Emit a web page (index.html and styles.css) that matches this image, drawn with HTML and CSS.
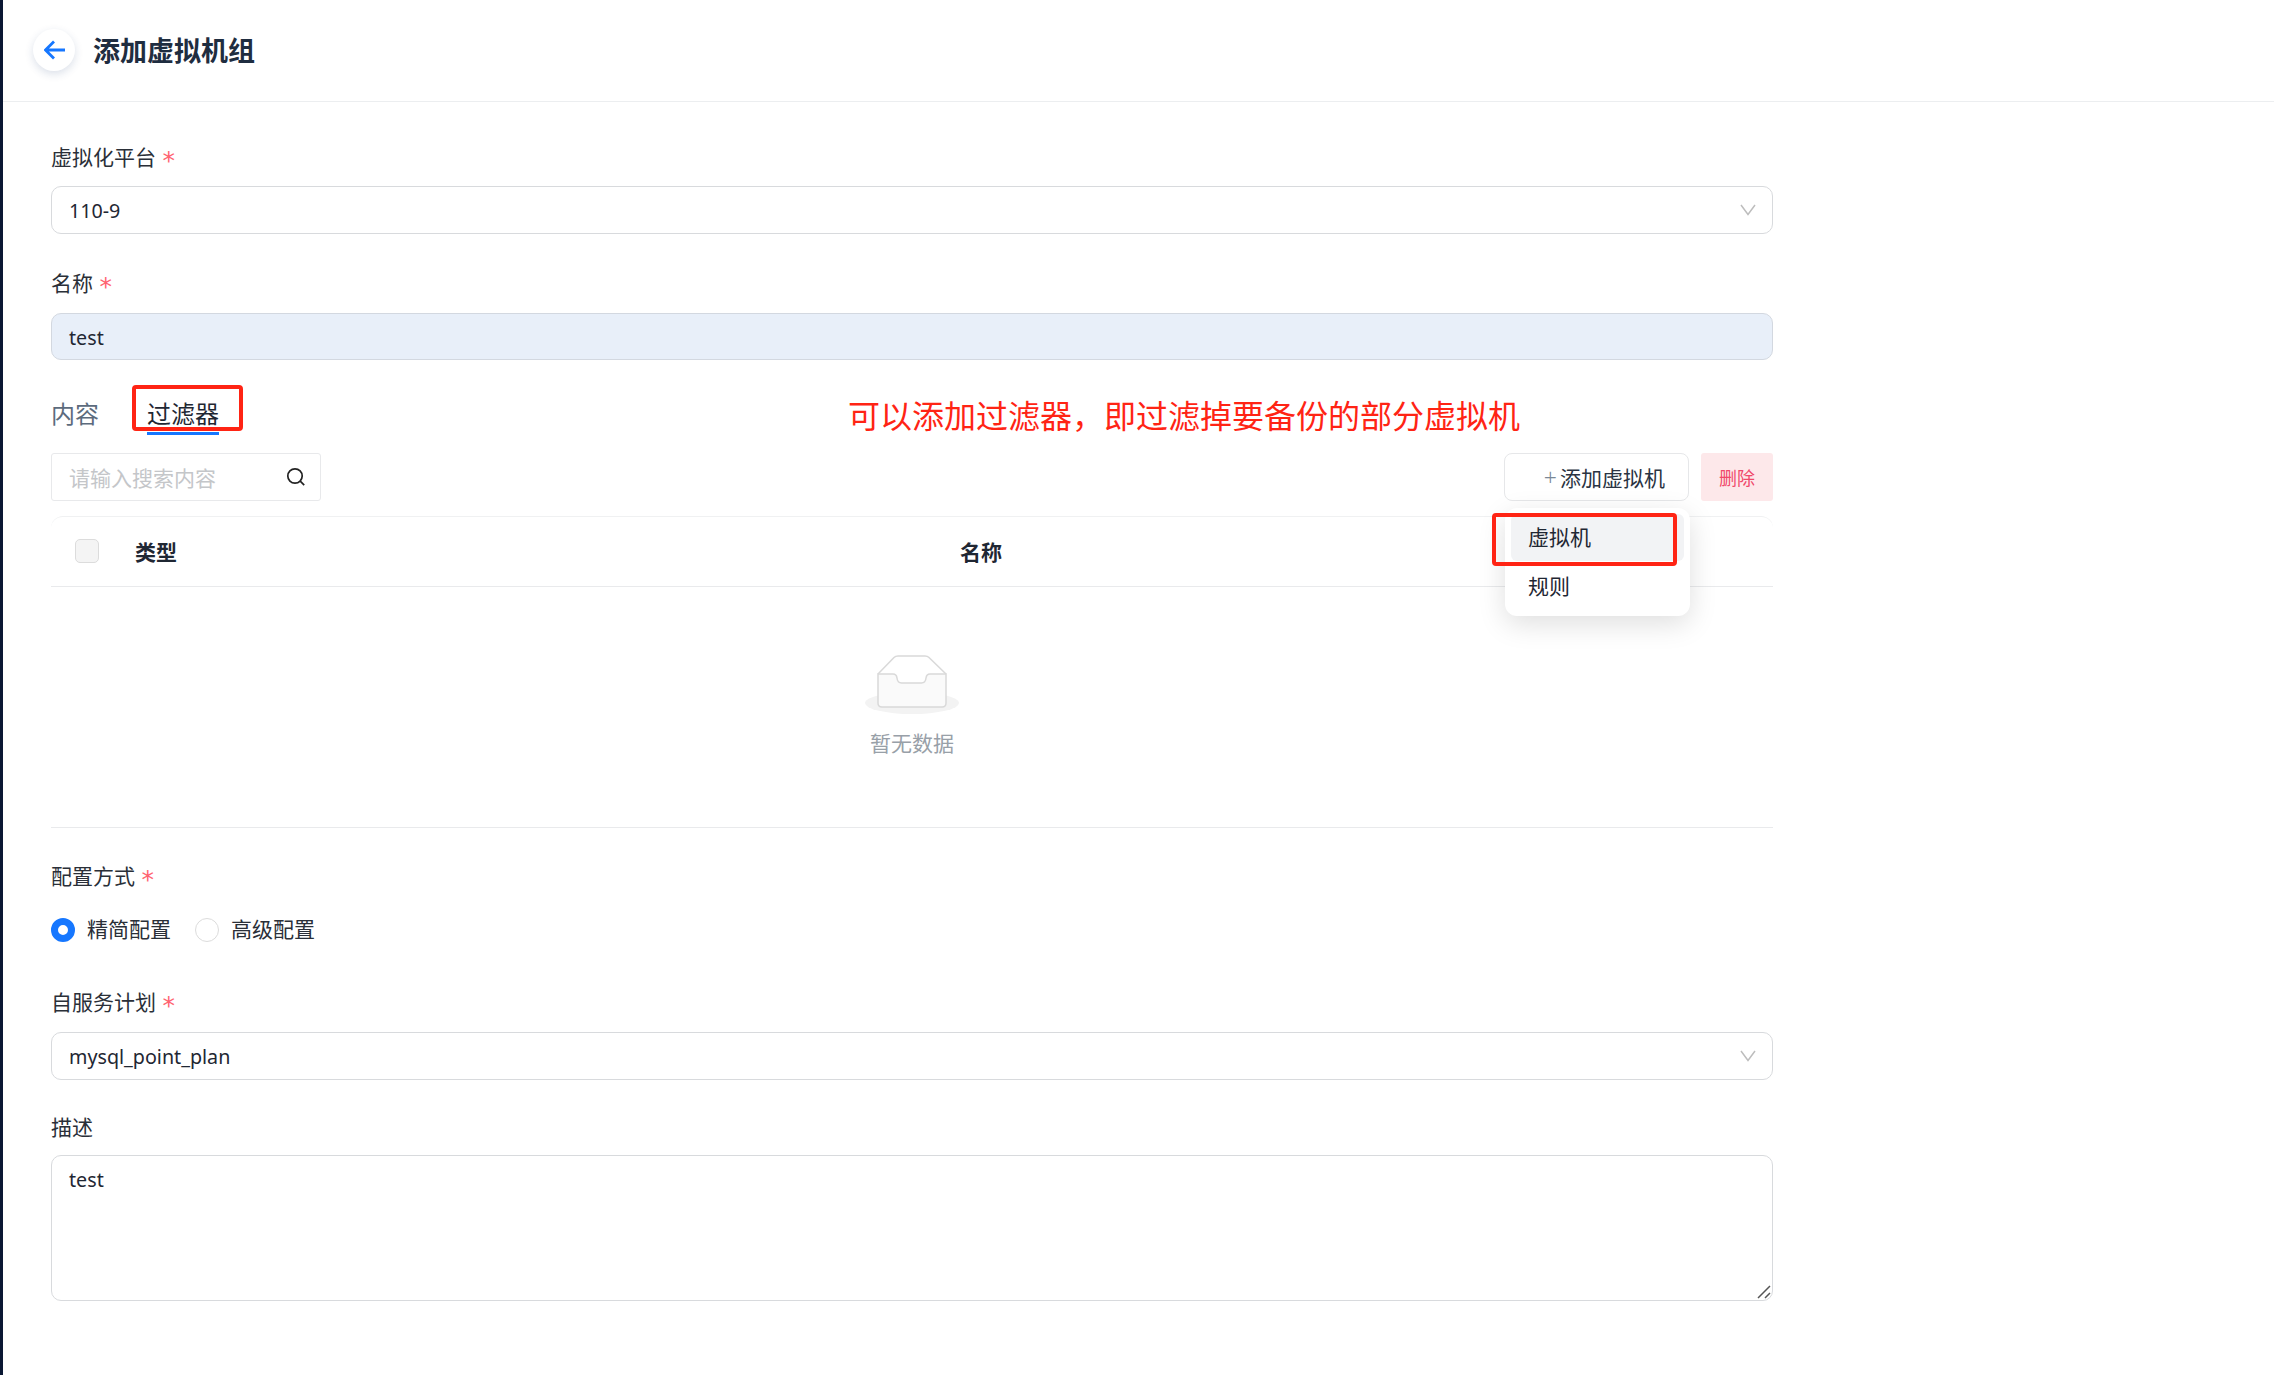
FILE: index.html
```html
<!DOCTYPE html>
<html lang="zh-CN">
<head>
<meta charset="utf-8">
<title>添加虚拟机组</title>
<link rel="stylesheet" href="styles.css">
</head>
<body>
<div class="page">
  <header class="topbar">
    <button class="back" aria-label="返回">
      <svg class="back-icon" width="22" height="20" viewBox="0 0 22 20"><path d="M21 10H2M10 1.500 1.500 10l8.500 8.500" fill="none" stroke="#1677ff" stroke-width="2.800"/></svg>
    </button>
    <h1 class="title">添加虚拟机组</h1>
  </header>
  <main class="form">
    <div class="label">虚拟化平台 <span class="req">*</span></div>
    <div class="control select"><span class="value">110-9</span>
      <svg class="chev" width="16" height="12" viewBox="0 0 16 12"><path d="M1 1l7 9.500L15 1" fill="none" stroke="#bdbdbd" stroke-width="1.500"/></svg>
    </div>

    <div class="label label-name">名称 <span class="req">*</span></div>
    <div class="control filled"><span class="value">test</span></div>

    <div class="tabs">
      <div class="tab">内容</div>
      <div class="tab active">过滤器<span class="mark mark-tab"></span></div>
      <div class="note">可以添加过滤器，即过滤掉要备份的部分虚拟机</div>
    </div>

    <div class="toolbar">
      <div class="search">
        <span class="placeholder">请输入搜索内容</span>
        <svg width="20" height="20" viewBox="0 0 20 20"><circle cx="9" cy="9" r="7.200" fill="none" stroke="#222" stroke-width="1.700"/><path d="M14.200 14.200l4 4" stroke="#222" stroke-width="1.700"/></svg>
      </div>
      <div class="actions">
        <div class="add-wrap">
          <button class="add"><span class="plus">+</span>添加虚拟机</button>
          <div class="menu">
            <div class="menu-item current">虚拟机</div>
            <div class="menu-item next">规则</div>
            <span class="mark mark-menu"></span>
          </div>
        </div>
        <button class="del">删除</button>
      </div>
    </div>

    <div class="thead">
      <span class="check"></span>
      <span class="th">类型</span>
      <span class="th">名称</span>
    </div>
    <div class="empty">
      <svg width="95" height="60" viewBox="0 0 95 60">
        <ellipse cx="47" cy="48" rx="47" ry="11" fill="#f3f3f3"/>
        <path d="M13 19 29 2.500Q30.500 1 33 1h27q2.500 0 4 1.500L81 19" fill="#fff" stroke="#d9d9d9" stroke-width="1.500"/>
        <path d="M13 19h15q3.500 0 4 4 .5 5 4.500 5h20q4 0 4.500-5 .5-4 4-4h16v29q0 4-4 4H17q-4 0-4-4z" fill="#fafafa" stroke="#d9d9d9" stroke-width="1.500"/>
      </svg>
      <div class="empty-text">暂无数据</div>
    </div>

    <div class="label label-config">配置方式 <span class="req">*</span></div>
    <div class="radios">
      <span class="radio on"></span><span class="radio-text">精简配置</span>
      <span class="radio"></span><span class="radio-text">高级配置</span>
    </div>

    <div class="label label-plan">自服务计划 <span class="req">*</span></div>
    <div class="control select"><span class="value">mysql_point_plan</span>
      <svg class="chev" width="16" height="12" viewBox="0 0 16 12"><path d="M1 1l7 9.500L15 1" fill="none" stroke="#bdbdbd" stroke-width="1.500"/></svg>
    </div>

    <div class="label label-desc">描述</div>
    <div class="area-wrap">
      <textarea class="area">test</textarea>
      <svg class="grip" width="14" height="14" viewBox="0 0 14 14"><path d="M1 13 13 1M8 13l5-5" stroke="#555" stroke-width="1.500" fill="none"/></svg>
    </div>
  </main>
</div>
</body>
</html>
```

FILE: styles.css
```css
* { box-sizing: border-box; }
html, body { margin: 0; height: 100%; }
body {
  background: #fff;
  color: #1f2733;
  font-family: "Noto Sans", "Noto Sans CJK SC", sans-serif;
  font-size: 21px;
}
.page {
  height: 1375px;
  overflow: hidden;
  border-left: 3px solid #0a1733;
}
.topbar {
  height: 102px;
  border-bottom: 1px solid #eceef0;
  display: flex;
  align-items: center;
  padding-left: 30px;
  gap: 19px;
  padding-bottom: 1px;
}
.back {
  width: 42px;
  height: 42px;
  border: 0;
  border-radius: 50%;
  background: #fff;
  box-shadow: 0 3px 9px rgba(30, 60, 120, .16);
  display: flex;
  align-items: center;
  justify-content: center;
  padding: 0;
}
.back-icon { margin-left: 2px; }
.title {
  margin: 2px 0 0 -1px;
  font-size: 27px;
  line-height: 36px;
  font-weight: 700;
  color: #1f2d40;
}
.form {
  width: 1770px;
  padding: 40px 0 0 48px;
}
.label {
  height: 30px;
  line-height: 30px;
  margin-bottom: 14px;
  color: #2a2f38;
}
.req {
  color: #ff6370;
  margin-left: 1px;
  font-family: "DejaVu Sans", sans-serif;
  font-size: 25px;
  line-height: 1;
  vertical-align: -4px;
}
.label-name { margin-top: 34px; margin-bottom: 15px; }
.label-config { margin-top: 33px; margin-bottom: 25px; }
.label-plan { margin-top: 43px; margin-bottom: 15px; }
.label-desc { margin-top: 32px; margin-bottom: 13px; }
.control {
  height: 48px;
  border: 1.500px solid #d8dadd;
  border-radius: 10px;
  padding: 0 16px 0 17px;
  display: flex;
  align-items: center;
  justify-content: space-between;
  color: #1f2733;
}
.value { font-size: 19.700px; padding-top: 1px; }
.filled { background: #e8eff9; height: 47px; border-color: #d3d8e0; }
.tabs {
  position: relative;
  display: flex;
  gap: 48px;
  margin-top: 36px;
  height: 39px;
}
.tab {
  position: relative;
  height: 39px;
  line-height: 36px;
  font-size: 24px;
  color: #5c6b7d;
}
.tab.active {
  color: #1f2733;
  border-bottom: 3px solid #1677ff;
}
.mark {
  position: absolute;
  border: 4.500px solid #ff2414;
  border-radius: 4px;
}
.mark-tab { left: -15px; right: -24px; top: -11px; bottom: 1px; }
.note {
  position: absolute;
  left: 797px;
  top: -2px;
  font-size: 32px;
  line-height: 44px;
  color: #ff2414;
  white-space: nowrap;
}
.toolbar {
  margin-top: 18px;
  height: 48px;
  display: flex;
  justify-content: space-between;
}
.search {
  width: 270px;
  border: 1.500px solid #e8e9eb;
  border-radius: 3px;
  display: flex;
  align-items: center;
  justify-content: space-between;
  padding: 0 14px 0 17px;
}
.placeholder { color: #c4c6c9; }
.actions { display: flex; gap: 12px; }
.add-wrap { position: relative; }
.add {
  width: 185px;
  height: 48px;
  border: 1.500px solid #e6e7e9;
  border-radius: 8px;
  background: #fff;
  font: inherit;
  color: #2a3342;
  padding: 0 23px 0 0;
  display: flex;
  align-items: center;
  justify-content: flex-end;
}
.plus { color: #7a8896; margin-right: 3px; font-size: 23px; font-weight: 300; }
.menu {
  position: absolute;
  left: 1px;
  top: 55px;
  width: 185px;
  height: 108px;
  padding: 6px;
  background: #fff;
  border-radius: 12px;
  box-shadow: 0 8px 28px rgba(0, 0, 0, .13);
  z-index: 2;
}
.menu-item {
  height: 47px;
  line-height: 47px;
  padding-left: 17px;
  border-radius: 6px;
}
.menu-item.next { margin-top: 2px; }
.menu-item.current { background: #f2f3f5; }
.mark-menu { left: -13px; top: 5px; width: 185px; height: 53px; }
.del {
  width: 72px;
  height: 48px;
  border: 0;
  border-radius: 3px;
  background: #fde8ea;
  color: #f0486a;
  font: inherit;
  font-size: 18px;
  padding: 0;
}
.thead {
  margin-top: 15px;
  height: 71px;
  padding-bottom: 1px;
  border-top: 1px solid #f0f1f2;
  border-bottom: 1.500px solid #e9eaec;
  border-radius: 12px 12px 0 0;
  display: grid;
  grid-template-columns: 84px 825px 1fr;
  align-items: center;
}
.check {
  width: 24px;
  height: 24px;
  margin-left: 24px;
  background: #f4f4f4;
  border: 1.500px solid #dcdcdc;
  border-radius: 5px;
}
.th { font-weight: 700; color: #1f2733; }
.empty {
  height: 241px;
  padding-top: 68px;
  border-bottom: 1.500px solid #e9eaec;
  display: flex;
  flex-direction: column;
  align-items: center;
}
.empty svg { display: block; }
.empty-text {
  margin-top: 13px;
  line-height: 30px;
  color: #98a0a8;
}
.radios {
  display: flex;
  align-items: center;
  height: 28px;
}
.radio {
  width: 24px;
  height: 24px;
  border-radius: 50%;
  border: 1.500px solid #dcdcdc;
  margin-right: 12px;
}
.radio.on { border: 7px solid #1677ff; }
.radio-text { margin: -2px 24px 0 0; line-height: 28px; color: #2a2f38; }
.area-wrap { position: relative; }
.area {
  display: block;
  width: 100%;
  height: 146px;
  border: 1.500px solid #d8dadd;
  border-radius: 10px;
  padding: 9px 17px;
  font: inherit;
  font-size: 19.700px;
  line-height: 30px;
  color: #1f2733;
  resize: none;
  outline: none;
}
.grip { position: absolute; right: 2px; bottom: 2px; }
```
